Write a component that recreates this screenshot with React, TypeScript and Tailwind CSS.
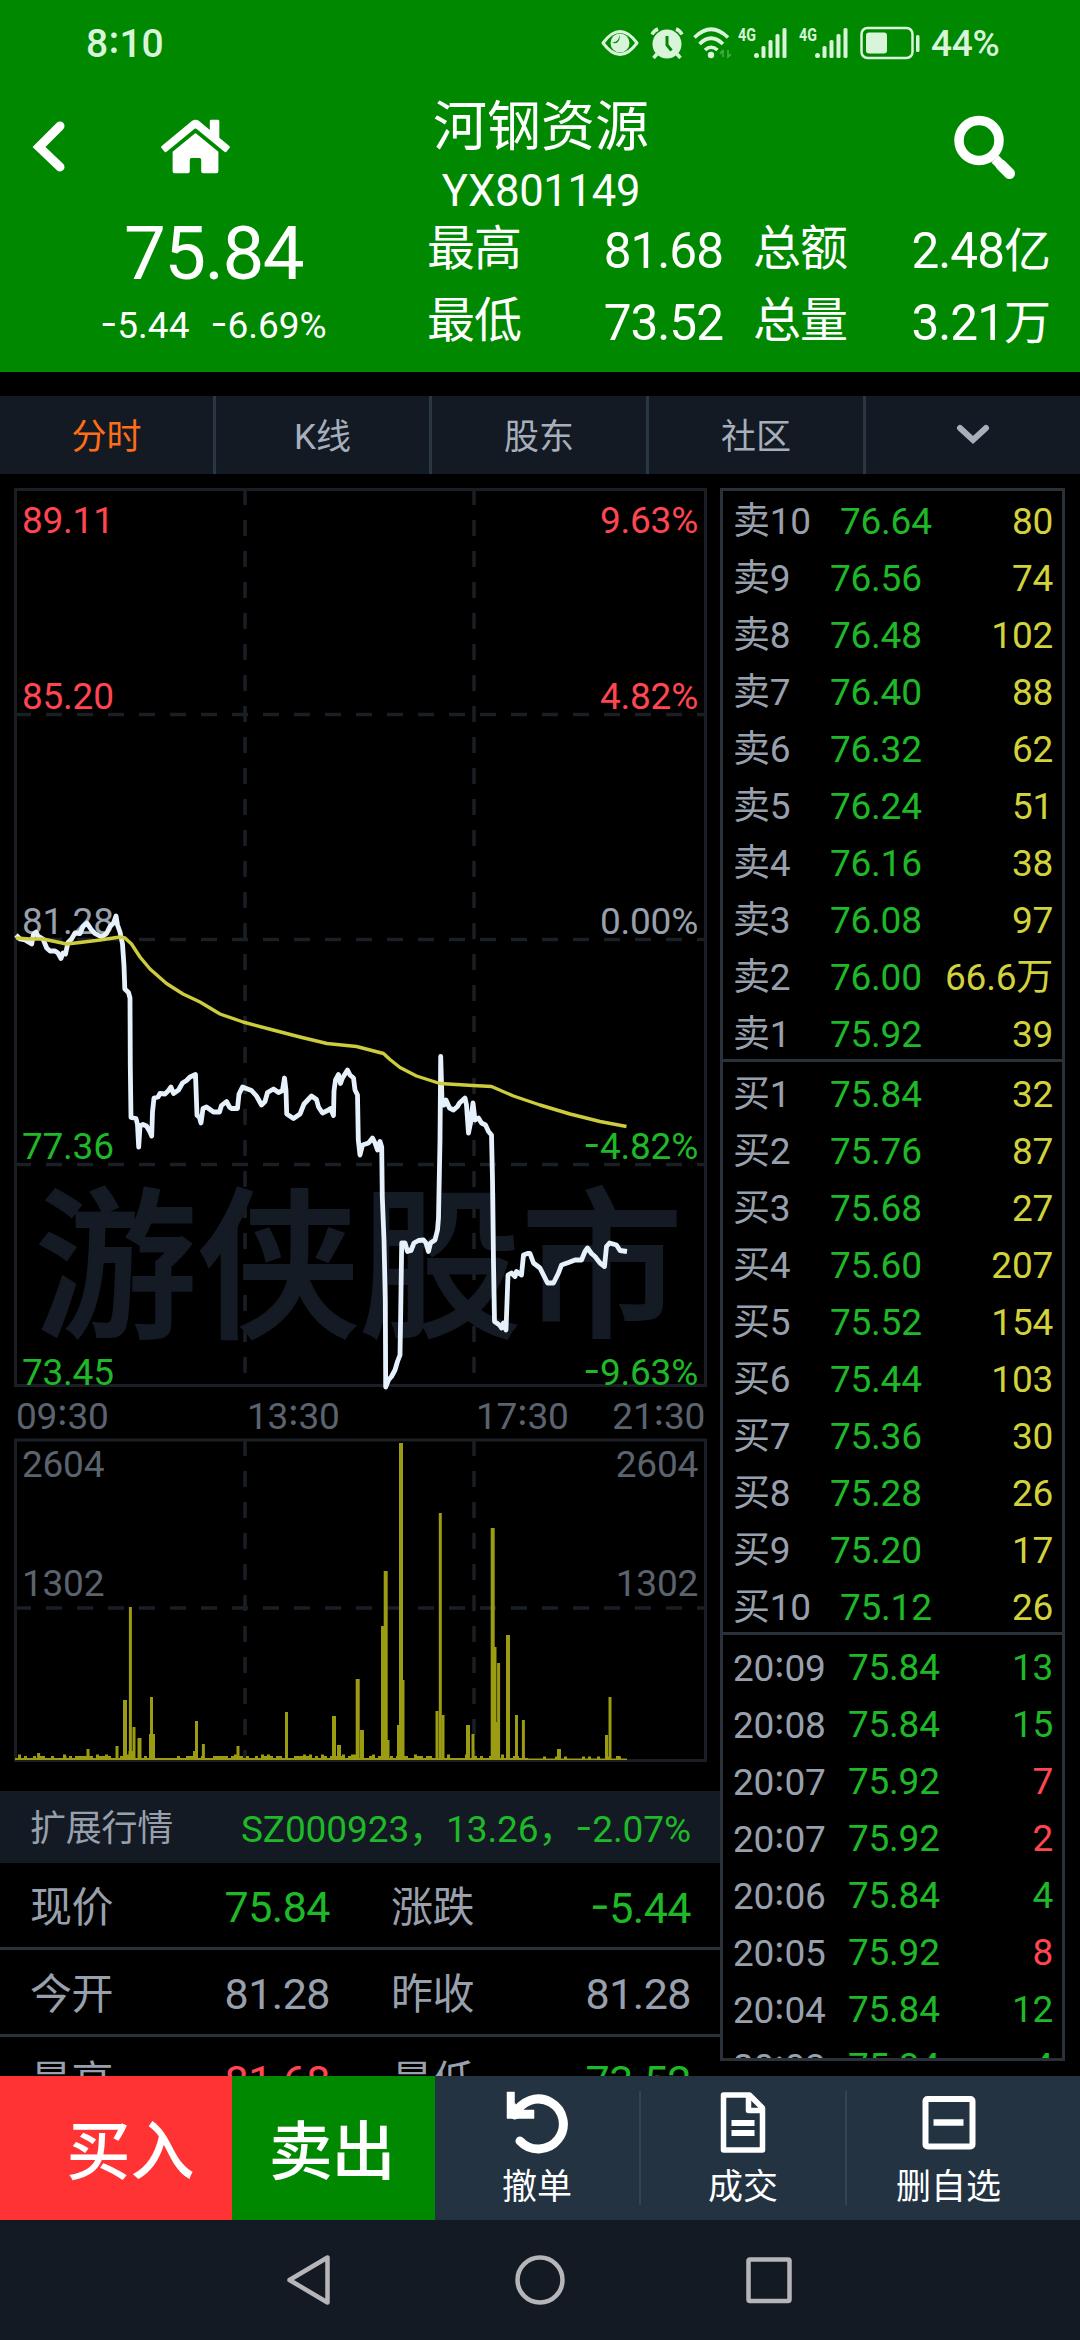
import React from "react";
import { FaHome } from "react-icons/fa";

const FONT = "font-['Roboto','Noto_Sans_CJK_SC',sans-serif] tracking-[-0.24px]";

const SELLS: [string, string, string][] = [
  ["卖10", "76.64", "80"],
  ["卖9", "76.56", "74"],
  ["卖8", "76.48", "102"],
  ["卖7", "76.40", "88"],
  ["卖6", "76.32", "62"],
  ["卖5", "76.24", "51"],
  ["卖4", "76.16", "38"],
  ["卖3", "76.08", "97"],
  ["卖2", "76.00", "66.6万"],
  ["卖1", "75.92", "39"],
];

const BUYS: [string, string, string][] = [
  ["买1", "75.84", "32"],
  ["买2", "75.76", "87"],
  ["买3", "75.68", "27"],
  ["买4", "75.60", "207"],
  ["买5", "75.52", "154"],
  ["买6", "75.44", "103"],
  ["买7", "75.36", "30"],
  ["买8", "75.28", "26"],
  ["买9", "75.20", "17"],
  ["买10", "75.12", "26"],
];

const TRADES: [string, string, string, boolean][] = [
  ["20:09", "75.84", "13", false],
  ["20:08", "75.84", "15", false],
  ["20:07", "75.92", "7", true],
  ["20:07", "75.92", "2", true],
  ["20:06", "75.84", "4", false],
  ["20:05", "75.92", "8", true],
  ["20:04", "75.84", "12", false],
  ["20:03", "75.84", "4", false],
];

const PRICE =
  "16,935 20,939 25,940 31.7,944 33.5,934 36,932 38,936 43,939 46.7,948 50,951 55,951 58,953 61,958.5 63,953 65.5,954 68,942.5 71.5,939 75,933 80,933.5 83,926.5 87,923 91.5,930 95,933.5 101.5,937 106.5,933.5 110,926.5 113.5,923 116,916 117.5,925 120,932 122.5,944 124,966 124.8,989 128.5,992.5 130,998 130.3,1066 131,1117.5 136,1118.5 137.5,1124.5 138.7,1147 140,1126 143,1124.5 146.5,1126 150,1132 151.7,1136 152.5,1112 154,1098 158,1097 160,1093.5 165,1094 168.5,1090.5 171,1087 173.5,1093.5 178.5,1090 182.5,1083 186.5,1080.5 190,1077 195.5,1074.5 197,1115.5 199.5,1117.5 201,1123 203,1108.5 206.5,1107 213.5,1112 219.5,1112 221.5,1105.5 226.5,1101.5 229.5,1107 231.5,1108.5 237.5,1108.5 239,1094 242.5,1087 247.5,1089 251.5,1090.5 256.5,1096 261.5,1105 265,1101.5 267.5,1092.5 273.5,1089 278.5,1092.5 282.5,1090.5 284.5,1078 286,1090.5 286.7,1114 293.5,1118.5 300,1114 304,1104 311.5,1096 316.5,1099.5 318.5,1107 322.5,1113 328.5,1110 330.5,1108.5 333.5,1115.5 334,1091 335.5,1080 338.5,1074.5 340.5,1083.5 342.5,1078 347.5,1070 350,1075 353.5,1078 355,1090 357.5,1095 358.3,1140 360,1155 362.5,1145 368.5,1143 372.5,1138 375,1143 377.5,1150 380,1141.5 381.7,1147 382.3,1197 384,1240 385.3,1300 385.7,1387 388.5,1380 391.5,1376.5 395,1370 397.5,1361.5 400,1355 400.7,1313 401.7,1243 405,1243 407.5,1251.5 411,1250.5 414,1243 418.5,1240.5 423.5,1240 426,1243 428.5,1251.5 430.5,1243 435,1240 437.5,1230 438.5,1218 440,1140 440.7,1056.5 442,1100 444,1105 446,1100 449.5,1108 453.5,1110 457.5,1106.5 459.5,1103 465,1098 466.5,1105 468.5,1133 470.5,1123 473,1103 475,1120 478.5,1118 481.5,1123 485.5,1125 488.5,1131.5 491.5,1135 492.5,1180 493.5,1263 494.5,1321.5 499.5,1325 501.5,1328 503.5,1323 506,1330 508,1275 511.5,1273 515,1276.5 516.5,1271.5 521.5,1275 523.5,1255 527.5,1253.5 530,1253.5 533.5,1263 540,1268 545,1278 547.5,1283 553.5,1283 558.5,1273 561.5,1265 568.5,1262.5 575,1260 581.5,1260 585,1251.5 587.5,1248 591.5,1253.5 595,1256.5 600,1263 604.5,1266.5 605.5,1256.5 606.5,1246.5 609.5,1243 616.5,1245 620,1250.5 627,1251.5";

const AVERAGE =
  "16,938 30,939 43,939 55,941.5 66.5,944 80,942.5 100,940 120,937 125,938 131.5,944 140,957 150,969 166.5,983.5 183,994 200,1002 220,1014 243,1022 273,1030 300,1037 327,1043.5 356.5,1046.5 383.5,1053.5 390,1059.5 400,1067.5 416.5,1076 440,1083.5 473,1085.5 491.5,1086.5 513.5,1096 540,1105 570,1114 600,1121.5 626.5,1126.5";

// [centre x, top y, width]
const VOLUME: [number, number, number][] = [
  [38.6, 1753, 3], [42, 1756, 6], [65, 1756, 3], [88, 1749, 3], [117, 1746, 3], [125, 1700, 4], [130.4, 1607, 3],
  [134, 1727, 3], [131.5, 1751, 6], [139.5, 1738, 4], [151.5, 1697, 3], [152, 1734, 6], [194.5, 1751, 3],
  [196.5, 1721, 3], [203.4, 1744, 3], [238, 1746, 3], [286.5, 1712, 3], [334, 1716, 4],
  [339, 1745, 4], [357.7, 1679, 4], [362, 1730, 4], [382.5, 1626, 3], [385.7, 1571, 4],
  [388, 1740, 3], [398.5, 1725, 3], [401, 1443, 4], [403, 1680, 3], [437, 1711, 3],
  [440.3, 1513, 3], [443, 1715, 3], [468, 1725, 4], [473, 1734, 3], [492.7, 1528, 4],
  [495, 1647, 3], [497, 1722, 4], [498.6, 1663, 3], [508, 1635, 4], [516.5, 1715, 3],
  [523.4, 1720, 3], [559, 1749, 4], [606.5, 1735, 3], [610, 1697, 3], [618, 1756, 4],
];

const FLOOR = Array.from({ length: 204 }, (_, i) => {
  const wave = Math.abs(Math.sin(i * 12.9898) * 43758.5453) % 1;
  const calm = i > 170;
  return { x: 15 + i * 3, h: calm ? 1.5 + (wave > 0.75 ? 2 : 0) : 2 + (wave > 0.55 ? 2 : 0) + (wave > 0.9 ? 1.5 : 0) };
});

const GRID = "#1a1e25";

// Signs and colons use Inter's case-height forms so they sit centred on the digits.
function Num({ children, svg = false }: { children: string; svg?: boolean }) {
  const cls = "font-['Inter'] [font-feature-settings:'case']";
  return (
    <>
      {children.split(/([-:])/).map((part, i) => {
        if (part !== "-" && part !== ":") return part;
        return svg ? (
          <tspan key={i} className={cls}>{part}</tspan>
        ) : (
          <span key={i} className={cls}>{part}</span>
        );
      })}
    </>
  );
}

function PriceChart() {
  return (
    <svg className="block h-[961px] w-[720px] shrink-0 overflow-visible" viewBox="0 474 720 961" fontSize="37">
      <g stroke={GRID} fill="none">
        <rect x="15.5" y="489.5" width="690" height="896" strokeWidth="3" />
        <g strokeWidth="3.5" strokeDasharray="16 15">
          <path d="M15 714.5H705" />
          <path d="M15 939.5H705" />
          <path d="M15 1164.5H705" />
          <path d="M245 489V1385" />
          <path d="M474 489V1385" />
        </g>
      </g>
      <text x="359" y="1325" textAnchor="middle" fontSize="162" fontWeight="500" letterSpacing="0" fill="#141b25" stroke="#141b25" strokeWidth="2">
        游侠股市
      </text>
      <g fill="#ff4650">
        <text x="22" y="533">89.11</text>
        <text x="22" y="709">85.20</text>
        <text x="698" y="533" textAnchor="end">9.63%</text>
        <text x="698" y="709" textAnchor="end">4.82%</text>
      </g>
      <g fill="#98a0ad">
        <text x="22" y="934">81.28</text>
        <text x="698" y="934" textAnchor="end">0.00%</text>
      </g>
      <g fill="#1fb828">
        <text x="22" y="1159">77.36</text>
        <text x="22" y="1384.5">73.45</text>
        <text x="698" y="1159" textAnchor="end"><Num svg>-4.82%</Num></text>
        <text x="698" y="1384.5" textAnchor="end"><Num svg>-9.63%</Num></text>
      </g>
      <g fill="#5b636e">
        <text x="16" y="1429"><Num svg>09:30</Num></text>
        <text x="247" y="1429"><Num svg>13:30</Num></text>
        <text x="476" y="1429"><Num svg>17:30</Num></text>
        <text x="705" y="1429" textAnchor="end"><Num svg>21:30</Num></text>
      </g>
      <polyline points={PRICE} fill="none" stroke="#e6f1fc" strokeWidth="4.8" strokeLinejoin="round" />
      <polyline points={AVERAGE} fill="none" stroke="#cccc3c" strokeWidth="3.4" strokeLinejoin="round" />
    </svg>
  );
}

function VolumeChart() {
  return (
    <svg className="block h-[356px] w-[720px] shrink-0" viewBox="0 1435 720 356" fontSize="37">
      <g stroke={GRID} fill="none">
        <rect x="15.5" y="1440" width="690" height="320.5" strokeWidth="3" />
        <g strokeWidth="3.5" strokeDasharray="16 15">
          <path d="M15 1608H705" />
          <path d="M245 1440V1760" />
          <path d="M474 1440V1760" />
        </g>
      </g>
      <g fill="#5b636e">
        <text x="22" y="1477">2604</text>
        <text x="698" y="1477" textAnchor="end">2604</text>
        <text x="22" y="1596">1302</text>
        <text x="698" y="1596" textAnchor="end">1302</text>
      </g>
      <g fill="#9c9c12">
        {FLOOR.map((b) => (
          <rect key={b.x} x={b.x} y={1760 - b.h} width="3" height={b.h} />
        ))}
        {VOLUME.map(([x, y, w]) => (
          <rect key={x} x={x - w / 2} y={y} width={w} height={1760 - y} />
        ))}
      </g>
    </svg>
  );
}

function BookRow({ label, price, volume, volumeClass }: { label: string; price: string; volume: string; volumeClass: string }) {
  const width = label.length === 2 ? "w-[97px]" : label.length === 3 ? "w-[107px]" : "w-[115px]";
  return (
    <div className="flex h-[57px] shrink-0 items-center pl-[10px] pr-[9px]">
      <span className={`${width} shrink-0 whitespace-nowrap text-[#98a0ad]`}><Num>{label}</Num></span>
      <span className="text-[#1fb828]">{price}</span>
      <span className={`ml-auto whitespace-nowrap ${volumeClass}`}>{volume}</span>
    </div>
  );
}

function StatRow({ a, av, ac, b, bv, bc }: { a: string; av: string; ac: string; b: string; bv: string; bc: string }) {
  return (
    <div className="flex h-[87px] shrink-0 items-center border-b-[3px] border-[#2a3138] pt-[5px] pl-[30px] text-[43px] leading-none tracking-[-0.5px] text-[#98a0ad]">
      <span className="w-[120px] text-[42px]">{a}</span>
      <span className={`w-[180px] text-right ${ac}`}><Num>{av}</Num></span>
      <span className="ml-[61px] w-[120px] text-[42px]">{b}</span>
      <span className={`w-[180px] text-right ${bc}`}><Num>{bv}</Num></span>
    </div>
  );
}

function Signal() {
  return (
    <div className="flex h-[30px] w-[49px] items-start">
      <span className="w-[16px] origin-left scale-x-75 text-[19px] font-bold leading-[14px] tracking-normal">4G</span>
      <svg className="h-[30px] w-[33px]" viewBox="0 0 33 30" fill="#d9f5d9">
        <circle cx="2.5" cy="27.5" r="2.5" />
        <rect x="7.5" y="18" width="4" height="12" rx="1.5" />
        <rect x="14.5" y="12" width="4" height="18" rx="1.5" />
        <rect x="21.5" y="6" width="4" height="24" rx="1.5" />
        <rect x="28.5" y="0" width="4" height="30" rx="1.5" />
      </svg>
    </div>
  );
}

function StatusBar() {
  return (
    <div className="flex h-[86px] items-center pl-[86px] pr-[79px] text-[#d9f5d9]">
      <span className="text-[39px] font-medium leading-none"><Num>8:10</Num></span>
      <svg className="ml-auto h-[28px] w-[38px]" viewBox="0 0 38 28">
        <path d="M2 14Q19 -9 36 14Q19 37 2 14Z" fill="none" stroke="#d9f5d9" strokeWidth="3" strokeLinejoin="round" />
        <circle cx="19" cy="14" r="9.5" fill="#d9f5d9" />
        <path d="M18 5.500A6.500 6.500 0 0 1 11 13.500Q15.500 15.500 17.500 12Q19.500 9 18 5.500Z" fill="#008800" />
      </svg>
      <svg className="ml-[11px] h-[32px] w-[34px]" viewBox="0 0 34 32">
        <circle cx="17" cy="17" r="14.500" fill="#d9f5d9" />
        <path d="M17 9V18L21.500 23.500" fill="none" stroke="#008800" strokeWidth="3" />
        <path d="M2 7.500Q4 3.500 8 2M32 7.500Q30 3.500 26 2M7 27L3.500 31M27 27L30.500 31" stroke="#d9f5d9" strokeWidth="3.500" fill="none" />
      </svg>
      <svg className="ml-[9px] h-[32px] w-[38px]" viewBox="0 0 38 32" fill="none" stroke="#d9f5d9" strokeWidth="3.600">
        <path d="M1.500 10.500Q18 -6 35 10.500" />
        <path d="M6.500 17Q18 5.500 30 17" />
        <path d="M12 23Q18 17.500 24.500 23" />
        <circle cx="18" cy="28" r="3.200" fill="#d9f5d9" stroke="none" />
        <path d="M30 23V30M27 27L30 23M35 23V30L38 27" strokeWidth="1.500" opacity=".35" />
      </svg>
      <div className="ml-[7px] flex gap-[12px]">
        <Signal />
        <Signal />
      </div>
      <svg className="ml-[12px] h-[34px] w-[61px]" viewBox="0 0 61 34">
        <rect x="1.500" y="2" width="51" height="30" rx="6" fill="none" stroke="#d9f5d9" strokeWidth="2.500" />
        <rect x="6" y="6.500" width="21" height="21" rx="3" fill="#d9f5d9" />
        <rect x="56" y="9" width="3.500" height="17" rx="1.500" fill="#d9f5d9" />
      </svg>
      <span className="ml-[10px] w-[70px] whitespace-nowrap text-[37px] font-medium leading-none">44%</span>
    </div>
  );
}

function Header() {
  const label = "-mt-[5px] text-[48px] tracking-[-0.02em]";
  return (
    <header className="flex h-[372px] shrink-0 flex-col bg-[#008800] text-white">
      <StatusBar />
      <div className="flex h-[125px] items-start">
        <svg className="ml-[32px] mt-[34px] h-[54px] w-[34px]" viewBox="0 0 34 54">
          <path d="M28 6L7 27L28 47" fill="none" stroke="#fff" strokeWidth="9" strokeLinecap="round" strokeLinejoin="miter" />
        </svg>
        <FaHome className="ml-[95px] mt-[30px] h-[61px] w-[69px]" />
        <div className="ml-[181px] flex w-[260px] flex-col items-center">
          <h1 className="mt-[15px] whitespace-nowrap text-[54px] font-normal leading-[54px] tracking-normal">河钢资源</h1>
          <p className="mt-[16px] text-[43.500px] leading-[42px]">YX801149</p>
        </div>
        <svg className="ml-auto mr-[64px] mt-[29px] h-[64px] w-[64px]" viewBox="951 115 64 64" fill="none" stroke="#fff">
          <circle cx="978" cy="140.500" r="20" strokeWidth="9.500" />
          <path d="M994 159L1008 173" strokeWidth="10" />
          <path d="M1000 165L1008.500 173.500" strokeWidth="11" strokeLinecap="round" />
        </svg>
      </div>
      <div className="flex">
        <div className="flex w-[427px] flex-col items-center">
          <span className="mt-[7px] text-[74.500px] leading-[72px] tracking-[-1.6px]">75.84</span>
          <span className="mt-[17px] flex gap-[21px] text-[37px] leading-[36px] tracking-normal">
            <span><Num>-5.44</Num></span>
            <span><Num>-6.69%</Num></span>
          </span>
        </div>
        <div className="flex flex-col gap-[12px] pt-[10px] text-[49.500px] leading-[60px] tracking-[-1px]">
          <div className="flex items-center">
            <span className={`${label} w-[140px]`}>最高</span>
            <span className="w-[156px] text-right">81.68</span>
            <span className={`${label} ml-[30px] w-[115px]`}>总额</span>
            <span className="flex w-[182px] items-center justify-end">
              2.48<span className="text-[47px]">亿</span>
            </span>
          </div>
          <div className="flex items-center">
            <span className={`${label} w-[140px]`}>最低</span>
            <span className="w-[156px] text-right">73.52</span>
            <span className={`${label} ml-[30px] w-[115px]`}>总量</span>
            <span className="flex w-[182px] items-center justify-end">
              3.21<span className="text-[47px]">万</span>
            </span>
          </div>
        </div>
      </div>
    </header>
  );
}

function Tabs() {
  const tab = "flex items-center justify-center border-r-[3px] border-[#2a3742]";
  return (
    <nav className="mt-[24px] grid h-[78px] shrink-0 grid-cols-[216px_216px_217px_217px_214px] bg-[#131a24] text-[35px] leading-none tracking-normal text-[#a6afbb] [&>div]:pt-[5px]">
      <div className={`${tab} text-[#ff6e17]`}>分时</div>
      <div className={tab}>K线</div>
      <div className={tab}>股东</div>
      <div className={tab}>社区</div>
      <div className="flex items-center justify-center">
        <svg className="-mt-[5px] h-[24px] w-[34px]" viewBox="0 0 34 24" fill="none" stroke="#a6afbb" strokeWidth="6">
          <path d="M4 5L17 17L30 5" strokeLinecap="round" />
        </svg>
      </div>
    </nav>
  );
}

function Footer() {
  const item = "flex flex-col items-center";
  const caption = "text-[35px] leading-[36px] tracking-normal";
  return (
    <footer className="shrink-0 text-white">
      <div className="flex h-[144px]">
        <button className="flex w-[232px] items-center justify-center bg-[#ff3333] pt-[10px] pl-[29px] text-[64px] font-medium leading-none tracking-normal">
          买入
        </button>
        <button className="flex w-[203px] items-center justify-center bg-[#008800] pt-[10px] pr-[10px] pl-[6px] text-[64px] font-medium leading-none tracking-[-0.02em]">
          卖出
        </button>
        <div className="flex flex-1 items-center bg-[#233342]">
          <div className={`${item} w-[204px]`}>
            <svg className="h-[64px] w-[64px]" viewBox="504 2085 64 64">
              <path d="M514 2110A25 25 0 1 1 519 2136" fill="none" stroke="#fff" strokeWidth="9" strokeLinecap="round" />
              <path d="M506 2087H513.500V2098L521 2105H533V2113.500H506Z" fill="#fff" stroke="#fff" strokeWidth=".5" />
            </svg>
            <span className={`${caption} mt-[16px]`}>撤单</span>
          </div>
          <div className="h-[114px] w-[2px] bg-[#35444f]" />
          <div className={`${item} w-[204px]`}>
            <svg className="h-[64px] w-[64px]" viewBox="710.500 2085 64 64" fill="none" stroke="#fff" strokeWidth="5.500" strokeLinejoin="round">
              <path d="M723 2090H749L762 2103V2145H723Z" />
              <path d="M748 2090V2105.500H762" />
              <path d="M731 2118H754M731 2128H754" strokeWidth="6" />
            </svg>
            <span className={`${caption} mt-[16px]`}>成交</span>
          </div>
          <div className="h-[114px] w-[2px] bg-[#35444f]" />
          <div className={`${item} w-[203px]`}>
            <svg className="h-[64px] w-[64px]" viewBox="916.500 2085 64 64" fill="none" stroke="#fff">
              <rect x="925" y="2094" width="47" height="47.500" rx="2" strokeWidth="6" />
              <path d="M933 2117.500H963" strokeWidth="6.500" />
            </svg>
            <span className={`${caption} mt-[16px]`}>删自选</span>
          </div>
        </div>
      </div>
      <div className="flex h-[120px] items-center bg-[#141a24] pl-[284px]">
        <svg className="h-[54px] w-[48px]" viewBox="284 2253 48 54" fill="none" stroke="#b6b6ba" strokeWidth="4.500" strokeLinejoin="round">
          <path d="M327.500 2257.500V2302.500L289.500 2280Z" />
        </svg>
        <svg className="ml-[181px] h-[54px] w-[54px]" viewBox="0 0 54 54" fill="none" stroke="#b6b6ba" strokeWidth="4.500">
          <circle cx="27" cy="27" r="22.500" />
        </svg>
        <svg className="ml-[175px] h-[54px] w-[54px]" viewBox="0 0 54 54" fill="none" stroke="#b6b6ba" strokeWidth="4.500">
          <rect x="6.500" y="6.500" width="41" height="41.500" rx="1.500" />
        </svg>
      </div>
    </footer>
  );
}

export default function App() {
  return (
    <div className={`flex h-[2340px] w-[1080px] flex-col overflow-hidden bg-black ${FONT}`}>
      <Header />
      <Tabs />
      <main className="flex h-[1602px] shrink-0 overflow-hidden">
        <section className="flex w-[720px] shrink-0 flex-col overflow-hidden">
          <PriceChart />
          <VolumeChart />
          <div className="flex h-[72px] shrink-0 items-center justify-between bg-[#131a24] pt-[4px] pl-[30px] pr-[29px] text-[37px] leading-none">
            <span className="text-[36px] text-[#98a0ad]">扩展行情</span>
            <span className="tracking-[-0.1px] text-[#1fb828]"><Num>SZ000923，13.26，-2.07%</Num></span>
          </div>
          <StatRow a="现价" av="75.84" ac="text-[#1fb828]" b="涨跌" bv="-5.44" bc="text-[#1fb828]" />
          <StatRow a="今开" av="81.28" ac="" b="昨收" bv="81.28" bc="" />
          <StatRow a="最高" av="81.68" ac="text-[#ff4650]" b="最低" bv="73.52" bc="text-[#1fb828]" />
        </section>
        <aside className="mt-[14px] flex h-[1573px] w-[345px] flex-col overflow-hidden border-[3px] border-[#2a3138] text-[37px] leading-none">
          <div className="h-[571px] shrink-0 border-b-[3px] border-[#2a3138] pt-[2px]">
            {SELLS.map(([l, p, v]) => (
              <BookRow key={l} label={l} price={p} volume={v} volumeClass="text-[#d2d23c]" />
            ))}
          </div>
          <div className="h-[573px] shrink-0 border-b-[3px] border-[#2a3138] pt-[4px]">
            {BUYS.map(([l, p, v]) => (
              <BookRow key={l} label={l} price={p} volume={v} volumeClass="text-[#d2d23c]" />
            ))}
          </div>
          <div className="pt-[4px]">
            {TRADES.map(([t, p, v, up], i) => (
              <BookRow key={i} label={t} price={p} volume={v} volumeClass={up ? "text-[#ff4650]" : "text-[#1fb828]"} />
            ))}
          </div>
        </aside>
      </main>
      <Footer />
    </div>
  );
}
